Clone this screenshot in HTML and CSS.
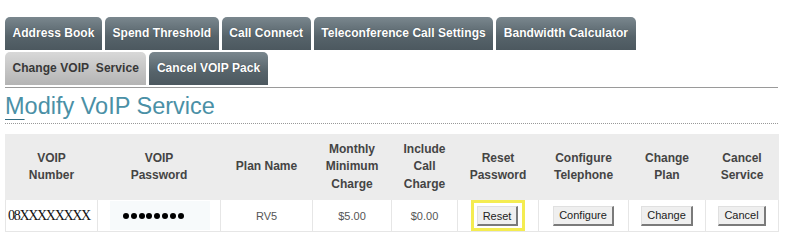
FILE: index.html
```html
<!DOCTYPE html>
<html>
<head>
<meta charset="utf-8">
<link rel="stylesheet" href="styles.css">
</head>
<body>
<div class="page">
  <nav class="tabs">
    <div class="tab-row">
      <a class="tab">Address Book</a>
      <a class="tab">Spend Threshold</a>
      <a class="tab">Call Connect</a>
      <a class="tab">Teleconference Call Settings</a>
      <a class="tab">Bandwidth Calculator</a>
    </div>
    <div class="tab-row">
      <a class="tab tab-active">Change VOIP&nbsp; Service</a>
      <a class="tab">Cancel VOIP Pack</a>
    </div>
  </nav>
  <h1 class="title"><span class="title-key">M</span>odify VoIP Service</h1>
  <table class="grid">
    <colgroup>
      <col style="width:92px"><col style="width:123px"><col style="width:92px">
      <col style="width:79px"><col style="width:66px"><col style="width:81px">
      <col style="width:90px"><col style="width:77px"><col style="width:73px">
    </colgroup>
    <thead>
      <tr>
        <th>VOIP<br>Number</th>
        <th>VOIP<br>Password</th>
        <th>Plan Name</th>
        <th>Monthly<br>Minimum<br>Charge</th>
        <th>Include<br>Call<br>Charge</th>
        <th>Reset<br>Password</th>
        <th>Configure<br>Telephone</th>
        <th>Change<br>Plan</th>
        <th>Cancel<br>Service</th>
      </tr>
    </thead>
    <tbody>
      <tr>
        <td class="num">08XXXXXXXX</td>
        <td><span class="pw"><span class="dot"></span><span class="dot"></span><span class="dot"></span><span class="dot"></span><span class="dot"></span><span class="dot"></span><span class="dot"></span><span class="dot"></span></span></td>
        <td>RV5</td>
        <td>$5.00</td>
        <td>$0.00</td>
        <td><span class="highlight"><button class="btn">Reset</button></span></td>
        <td><button class="btn">Configure</button></td>
        <td><button class="btn">Change</button></td>
        <td><button class="btn">Cancel</button></td>
      </tr>
    </tbody>
  </table>
</div>
</body>
</html>
```
FILE: styles.css
```css
html, body {
  margin: 0;
  padding: 0;
  background: #fff;
}
.page {
  padding: 17px 0 0 5px;
  width: 773px;
  font-family: "Liberation Sans", Arial, sans-serif;
}
.tabs {
  display: flex;
  flex-direction: column;
  gap: 2px;
  padding-bottom: 2px;
  border-bottom: 1px solid #9a9a9a;
}
.tab-row {
  display: flex;
  gap: 3px;
}
.tab {
  display: block;
  height: 33px;
  line-height: 33px;
  padding: 0 7.5px;
  font-size: 12px;
  font-weight: bold;
  letter-spacing: 0.05px;
  color: #fff;
  white-space: nowrap;
  border-radius: 5px 5px 0 0;
  background: linear-gradient(#7a878e, #56636a 60%, #4c585f);
  text-shadow: 0 0 1px rgba(0,0,0,0.4);
}
.tab-active {
  color: #383838;
  background: linear-gradient(#d8d8d8, #c2c2c2 60%, #b4b4b4);
  text-shadow: none;
}
.title {
  margin: 4px 0 0 0;
  padding-bottom: 3px;
  font-size: 23.5px;
  line-height: 28px;
  font-weight: normal;
  color: #4a90a6;
  border-bottom: 1px dotted #999;
}
.title-key {
  text-decoration: underline;
  text-decoration-thickness: 1px;
  text-decoration-color: #2f6a80;
  text-underline-offset: 5px;
}
.grid {
  margin-top: 10px;
  width: 773px;
  table-layout: fixed;
  border-collapse: collapse;
}
.grid th {
  height: 64px;
  padding: 0;
  background: #ececec;
  color: #444;
  font-size: 12px;
  font-weight: bold;
  line-height: 17.5px;
  text-align: center;
  vertical-align: middle;
  border: 1px solid #ececec;
}
.grid td {
  height: 31px;
  padding: 0;
  color: #555;
  font-size: 11px;
  text-align: center;
  vertical-align: middle;
  border: 1px solid #e6e6e6;
}
.grid td.num {
  text-align: left;
  padding-left: 2px;
  font-family: "Liberation Serif", "Times New Roman", serif;
  font-size: 14px;
  letter-spacing: -1.3px;
  color: #111;
}
.pw {
  display: flex;
  align-items: center;
  gap: 1.8px;
  margin: 0 10px 0 12px;
  height: 29px;
  padding-left: 13px;
  background: #f7fafb;
}
.dot {
  width: 6px;
  height: 6px;
  border-radius: 50%;
  background: #000;
}
.btn {
  height: 20px;
  padding: 0 5px;
  font-family: "Liberation Sans", Arial, sans-serif;
  font-size: 11px;
  color: #222;
  background: #efefef;
  border-style: solid;
  border-width: 1px 2px 2px 1px;
  border-color: #e0e0e0 #7a7a7a #7a7a7a #e0e0e0;
  border-radius: 0;
}
.highlight {
  display: inline-flex;
  padding: 3px 4px 2px 3px;
  border: 3px solid #f4ec50;
}
```
